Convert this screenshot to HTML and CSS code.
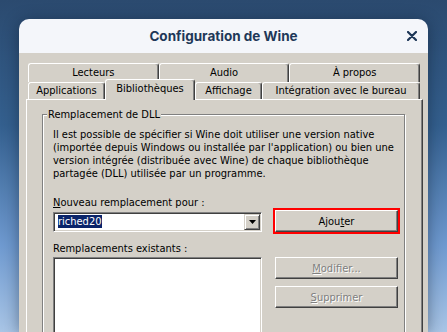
FILE: index.html
```html
<!DOCTYPE html>
<html>
  <head>
    <title>Configuration de Wine</title>
    <link rel="stylesheet" href="styles.css">
  </head>
  <body>
    <div class="window">
      <div class="titlebar">
        <span></span>
        <h1 class="title">Configuration de Wine</h1>
        <button class="close" aria-label="Fermer">
          <svg width="10" height="10" viewBox="0 0 10 10">
            <path d="M1 1 L9 9 M9 1 L1 9" stroke="#1d3656" stroke-width="2.2" stroke-linecap="round" />
          </svg>
        </button>
      </div>

      <div class="dialog">
        <div class="tabs">
          <div class="tab-row">
            <div class="tab">Lecteurs</div>
            <div class="tab">Audio</div>
            <div class="tab">À propos</div>
          </div>
          <div class="tab-row tab-row-front">
            <div class="tab tab-apps">Applications</div>
            <div class="tab tab-libs selected">Bibliothèques</div>
            <div class="tab tab-display">Affichage</div>
            <div class="tab tab-desktop">Intégration avec le bureau</div>
          </div>
        </div>

        <div class="panel">
          <fieldset class="group">
            <legend>Remplacement de DLL</legend>
            <p class="intro">
              Il est possible de spécifier si Wine doit utiliser une version native<br>
              (importée depuis Windows ou installée par l'application) ou bien une<br>
              version intégrée (distribuée avec Wine) de chaque bibliothèque<br>
              partagée (DLL) utilisée par un programme.
            </p>

            <div class="override-grid">
              <label class="field-label"><u>N</u>ouveau remplacement pour :</label>
              <span></span>

              <div class="combo">
                <div class="combo-text"><span class="selection">riched20</span></div>
                <div class="combo-arrow">
                  <svg width="7" height="4" viewBox="0 0 7 4"><path d="M0 0 H7 L3.5 4 Z" fill="#000" /></svg>
                </div>
              </div>
              <button class="btn btn-add">Ajou<u>t</u>er</button>

              <label class="field-label label-existing">Remplacements existants :</label>
              <span></span>

              <div class="listbox"></div>
              <div class="btn-stack">
                <button class="btn" disabled><u>M</u>odifier...</button>
                <button class="btn" disabled><u>S</u>upprimer</button>
              </div>
            </div>
          </fieldset>
        </div>
      </div>
    </div>
  </body>
</html>
```

FILE: styles.css
```css
body {
  margin: 0;
  height: 332px;
  overflow: hidden;
  background: linear-gradient(to bottom, #2b4a6f 0%, #34608f 38%, #6f9ad0 74%, #a9c5e6 100%);
}
.window {
  width: 409px;
  height: 313px;
  margin: 19px 0 0 19px;
  border-radius: 10px 10px 0 0;
  overflow: hidden;
  display: flex;
  flex-direction: column;
  box-shadow: 0 2px 16px rgba(8, 22, 40, 0.45);
}
.titlebar {
  height: 34px;
  flex-shrink: 0;
  background: #f4f6fa;
  display: grid;
  grid-template-columns: 1fr auto 1fr;
  align-items: center;
  padding: 0 11px;
}
.title {
  margin: 0;
  font: 700 13.5px "Inter", "Open Sans", sans-serif;
  color: #1e3858;
}
.close {
  justify-self: end;
  border: 0;
  background: none;
  padding: 0;
  width: 10px;
  height: 10px;
  display: flex;
}
.dialog {
  flex: 1;
  background: #d4d0c8;
  padding: 10px 5px 0 7px;
  font-family: "DejaVu Sans Condensed", "DejaVu Sans", sans-serif;
  font-size: 11px;
  line-height: 13px;
  color: #000;
  display: flex;
  flex-direction: column;
  min-height: 0;
}

/* tabs */
.tab-row {
  display: flex;
  margin: 0 3px 0 2px;
}
.tab {
  flex: 1;
  height: 19px;
  box-sizing: border-box;
  border-top: 1px solid #fff;
  border-left: 1px solid #fff;
  border-right: 1px solid #404040;
  border-radius: 3px 3px 0 0;
  box-shadow: inset -1px 0 0 #808080;
  text-align: center;
  line-height: 17px;
  white-space: nowrap;
  background: #d4d0c8;
}
.tab-row-front {
  height: 17px;
  align-items: flex-end;
}
.tab-row-front .tab {
  flex: none;
  height: 17px;
  line-height: 15px;
}
.tab-apps {
  width: 77px;
}
.tab-libs {
  width: 90px;
}
.tab-display {
  width: 67px;
}
.tab-row-front .tab-desktop {
  flex: 1;
}
.tab-row-front .selected {
  height: 21px;
  margin-bottom: -1px;
  line-height: 17px;
  position: relative;
  z-index: 1;
}

/* panel */
.panel {
  flex: 1;
  min-height: 0;
  overflow: hidden;
  border-top: 1px solid #fff;
  border-left: 1px solid #fff;
  border-right: 1px solid #404040;
  box-shadow: inset -1px 0 0 #808080;
  padding: 8px 17px 0 15px;
}
.group {
  margin: 0;
  border: 1px solid #808080;
  box-shadow: inset 1px 1px 0 #fff, 1px 1px 0 #fff;
  padding: 7px 6px 0 10px;
  min-width: 0;
}
.group legend {
  padding: 0 1px;
  margin-left: -6px;
  background: #d4d0c8;
  line-height: 13px;
}
.intro {
  margin: 0;
}
.override-grid {
  display: grid;
  grid-template-columns: 209px 123px;
  column-gap: 13px;
  margin-top: 16px;
}
.field-label {
  margin-bottom: 1px;
}
.label-existing {
  margin-top: 10px;
  margin-bottom: 2px;
}

/* controls */
.combo,
.listbox {
  box-sizing: border-box;
  border: 1px solid;
  border-color: #808080 #fff #fff #808080;
  box-shadow: inset 1px 1px 0 #404040, inset -1px -1px 0 #d4d0c8;
  background: #fff;
}
.combo {
  height: 20px;
  align-self: end;
  padding: 1px;
  display: flex;
}
.combo-text {
  flex: 1;
  padding: 1px 0 0 3px;
}
.selection {
  background: #0a246a;
  color: #fff;
}
.combo-arrow {
  width: 16px;
  height: 16px;
  box-sizing: border-box;
  background: #d4d0c8;
  border: 1px solid;
  border-color: #d4d0c8 #404040 #404040 #d4d0c8;
  box-shadow: inset 1px 1px 0 #fff, inset -1px -1px 0 #808080;
  display: flex;
  align-items: center;
  justify-content: center;
}
.listbox {
  height: 90px;
}
.btn {
  height: 22px;
  box-sizing: border-box;
  padding: 0;
  background: #d4d0c8;
  border: 1px solid;
  border-color: #fff #404040 #404040 #fff;
  box-shadow: inset -1px -1px 0 #808080;
  font: inherit;
  color: #000;
}
.btn:disabled {
  color: #808080;
  text-shadow: 1px 1px 0 #fff;
}
.btn-add {
  outline: 2px solid #ff0000;
}
.btn-stack {
  display: flex;
  flex-direction: column;
  gap: 7px;
}
```
